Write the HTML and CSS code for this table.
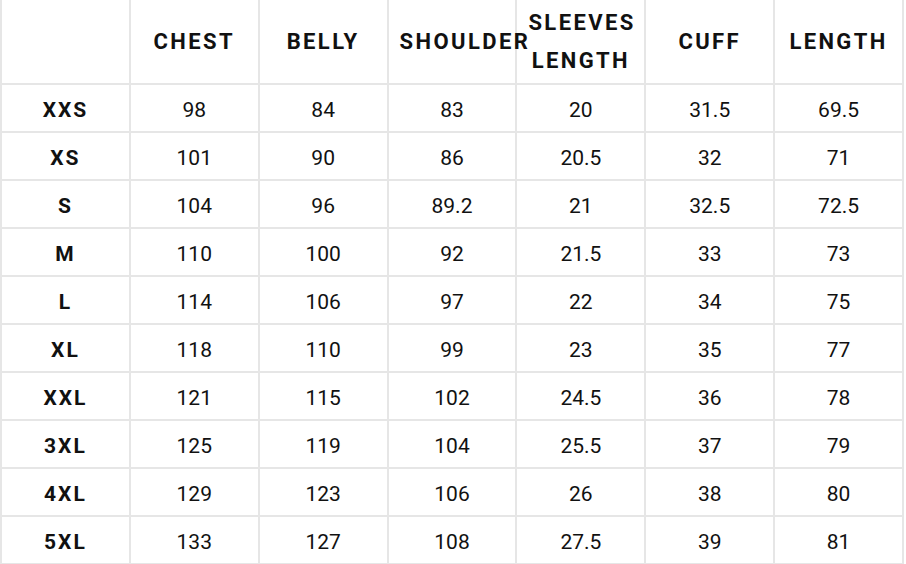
FILE: index.html
```html
<!DOCTYPE html>
<html>
<head>
<meta charset="utf-8">
<link rel="stylesheet" href="styles.css">
</head>
<body>
<div class="chart">
  <div class="cell head"></div>
  <div class="cell head"><span>CHEST</span></div>
  <div class="cell head"><span>BELLY</span></div>
  <div class="cell head"><span>SHOULDER</span></div>
  <div class="cell head"><span>SLEEVES LENGTH</span></div>
  <div class="cell head"><span>CUFF</span></div>
  <div class="cell head"><span>LENGTH</span></div>

  <div class="cell size">XXS</div><div class="cell">98</div><div class="cell">84</div><div class="cell">83</div><div class="cell">20</div><div class="cell">31.5</div><div class="cell">69.5</div>
  <div class="cell size">XS</div><div class="cell">101</div><div class="cell">90</div><div class="cell">86</div><div class="cell">20.5</div><div class="cell">32</div><div class="cell">71</div>
  <div class="cell size">S</div><div class="cell">104</div><div class="cell">96</div><div class="cell">89.2</div><div class="cell">21</div><div class="cell">32.5</div><div class="cell">72.5</div>
  <div class="cell size">M</div><div class="cell">110</div><div class="cell">100</div><div class="cell">92</div><div class="cell">21.5</div><div class="cell">33</div><div class="cell">73</div>
  <div class="cell size">L</div><div class="cell">114</div><div class="cell">106</div><div class="cell">97</div><div class="cell">22</div><div class="cell">34</div><div class="cell">75</div>
  <div class="cell size">XL</div><div class="cell">118</div><div class="cell">110</div><div class="cell">99</div><div class="cell">23</div><div class="cell">35</div><div class="cell">77</div>
  <div class="cell size">XXL</div><div class="cell">121</div><div class="cell">115</div><div class="cell">102</div><div class="cell">24.5</div><div class="cell">36</div><div class="cell">78</div>
  <div class="cell size">3XL</div><div class="cell">125</div><div class="cell">119</div><div class="cell">104</div><div class="cell">25.5</div><div class="cell">37</div><div class="cell">79</div>
  <div class="cell size">4XL</div><div class="cell">129</div><div class="cell">123</div><div class="cell">106</div><div class="cell">26</div><div class="cell">38</div><div class="cell">80</div>
  <div class="cell size">5XL</div><div class="cell">133</div><div class="cell">127</div><div class="cell">108</div><div class="cell">27.5</div><div class="cell">39</div><div class="cell">81</div>
</div>
</body>
</html>
```
FILE: styles.css
```css
html, body {
  margin: 0;
  padding: 0;
  background: #ffffff;
}
.chart {
  display: grid;
  box-sizing: border-box;
  width: 904px;
  grid-template-columns: repeat(7, 1fr);
  grid-template-rows: 83px repeat(10, 46px);
  gap: 2px;
  padding: 0 2px 2px 2px;
  background: #e6e6e6;
  font-family: Roboto, "Liberation Sans", sans-serif;
  color: #111;
}
.cell {
  background: #fff;
  display: flex;
  align-items: center;
  justify-content: center;
  font-size: 21px;
  font-weight: 400;
  padding-top: 3px;
  box-sizing: border-box;
  min-width: 0;
}
.head {
  padding: 1px 11px 0 11px;
  font-weight: 700;
  font-size: 22px;
  letter-spacing: 2.4px;
  line-height: 38px;
  justify-content: flex-start;
}
.head span {
  display: block;
  width: 100%;
  text-align: center;
  position: relative;
  z-index: 1;
}
.size {
  font-weight: 700;
  letter-spacing: 2px;
}
```
